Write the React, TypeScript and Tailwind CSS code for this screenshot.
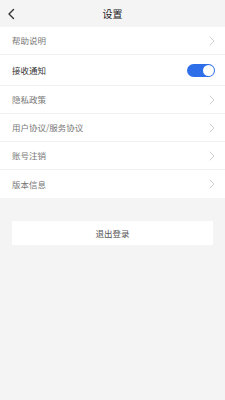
import React, { useState } from "react";

const rows = ["隐私政策", "用户协议/服务协议", "账号注销", "版本信息"];

function Chevron() {
  return (
    <svg width="6" height="10" viewBox="0 0 6 10" fill="none">
      <path d="M1 1l4 4-4 4" stroke="#c8c8c8" strokeWidth="0.9" strokeLinecap="round" strokeLinejoin="round" />
    </svg>
  );
}

export default function App() {
  const [notify, setNotify] = useState(true);

  return (
    <div
      className="min-h-[400px] w-[225px] bg-[#f4f4f4]"
      style={{ fontFamily: '"Noto Sans CJK SC", "Noto Sans", sans-serif' }}
    >
      <div className="relative flex h-[27px] items-center justify-center">
        <button className="absolute left-[7px] top-[8px]">
          <svg width="9" height="12" viewBox="0 0 9 12" fill="none">
            <path d="M6.5 1.5L2 6l4.5 4.5" stroke="#333" strokeWidth="1.4" strokeLinecap="round" strokeLinejoin="round" />
          </svg>
        </button>
        <h1 className="text-[10px] text-[#222]">设置</h1>
      </div>

      <div className="bg-white">
        <div className="flex h-[28px] items-center justify-between border-b border-[#f0f0f0] pl-[12px] pr-[10px]">
          <span className="text-[8.5px] text-[#777]">帮助说明</span>
          <Chevron />
        </div>
        <div className="flex h-[31px] items-center justify-between border-b border-[#f0f0f0] pl-[12px] pr-[10px]">
          <span className="text-[8.5px] text-[#333]">接收通知</span>
          <button
            onClick={() => setNotify(!notify)}
            className={`flex h-[13px] w-[28px] items-center rounded-full px-[1px] ${notify ? "justify-end bg-[#2f6ee9]" : "justify-start bg-[#ddd]"}`}
          >
            <span className="h-[11px] w-[11px] rounded-full bg-white" />
          </button>
        </div>
        {rows.map((r, i) => (
          <div
            key={r}
            className={`flex h-[28px] items-center justify-between pl-[12px] pr-[10px] ${i < rows.length - 1 ? "border-b border-[#f0f0f0]" : ""}`}
          >
            <span className="text-[8.5px] text-[#777]">{r}</span>
            <Chevron />
          </div>
        ))}
      </div>

      <div className="px-[12px] pt-[23px]">
        <button className="flex h-[24px] w-full items-center justify-center bg-white text-[8.5px] text-[#555]">
          退出登录
        </button>
      </div>
    </div>
  );
}
